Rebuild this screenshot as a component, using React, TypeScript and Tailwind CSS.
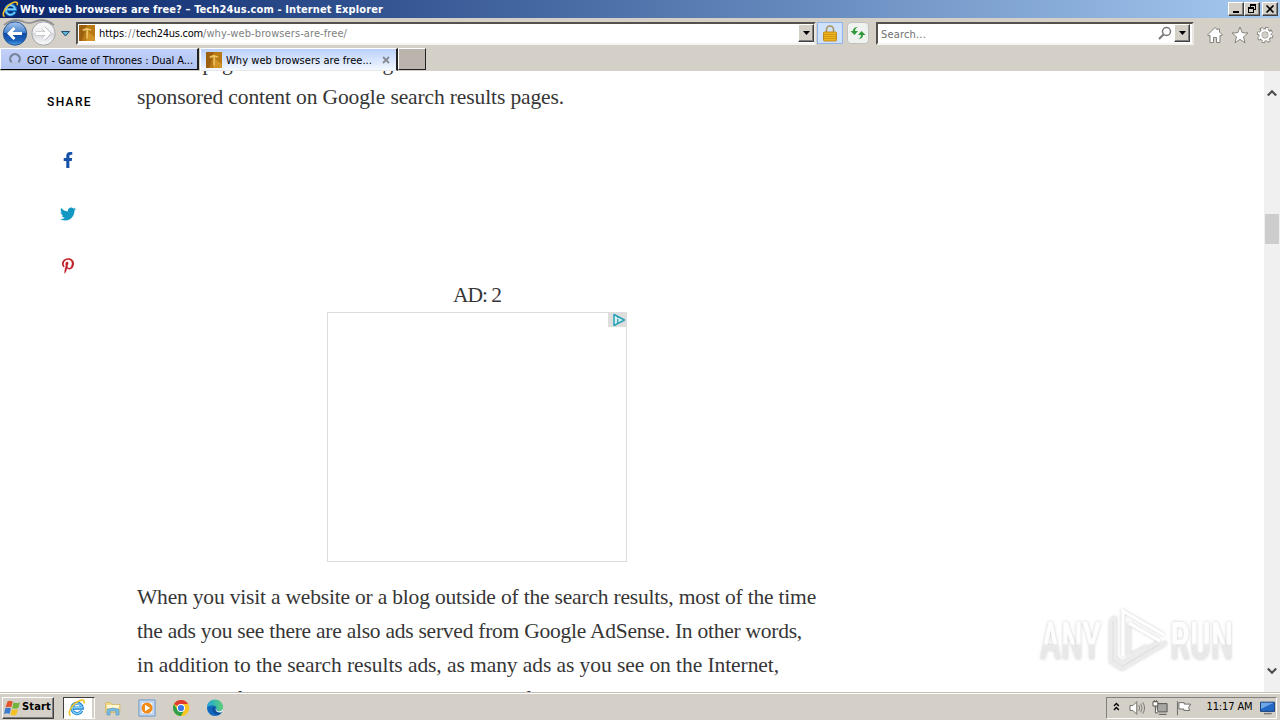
import { useLayoutEffect, useRef, useState } from "react";
import { FaFacebookF, FaTwitter, FaPinterestP } from "react-icons/fa";

/** Single line of text, tracked so that it spans the given width. */
function Fit({ text, width, className = "" }: { text: string; width: number; className?: string }) {
  const ref = useRef<HTMLSpanElement>(null);
  const [spacing, setSpacing] = useState(0);
  useLayoutEffect(() => {
    if (!ref.current) return;
    const natural = ref.current.getBoundingClientRect().width - spacing * text.length;
    setSpacing((width - natural) / text.length);
  }, [text, width]);
  return (
    <span ref={ref} className={"inline-block whitespace-pre " + className} style={{ letterSpacing: spacing + "px" }}>
      {text}
    </span>
  );
}

function IeLogo({ className = "" }: { className?: string }) {
  return (
    <svg viewBox="0 0 18 18" className={className}>
      <path d="M13.8 11.6A5.2 5.2 0 1 1 14.3 9.2H5.2" fill="none" stroke="#1b7fd0" strokeWidth="3.2" />
      <path d="M13.6 11.6A5 5 0 1 1 14 8.8H5" fill="none" stroke="#7fd0fa" strokeWidth="1.5" />
      <path d="M2.6 16.6C-1 14 4 5 11 2c4-1.8 6-.8 5 2.4" fill="none" stroke="#f2c428" strokeWidth="1.6" />
    </svg>
  );
}

function SiteIcon() {
  return (
    <svg viewBox="0 0 16 16" className="h-4 w-4 shrink-0">
      <rect width="16" height="16" fill="#b97a16" />
      <path d="M0 0H8L3 16H0Z" fill="#9c6110" />
      <path d="M9 7L16 12V16H7Z" fill="#cf9326" />
      <path d="M3.500 4.500l4-1.800 5 1.800-.8 1.200-2.500-.6L8.800 13.500H7.200L7.400 5.200 4 6Z" fill="#ecc263" />
    </svg>
  );
}

const raised = "border border-t-white border-l-white border-r-[#404040] border-b-[#404040] bg-[#d4d0c8]";

function DropButton() {
  return (
    <div className={"flex h-[18px] w-4 items-center justify-center shadow-[inset_-1px_-1px_#808080] " + raised}>
      <svg viewBox="0 0 7 4" className="h-1 w-[7px]"><path d="M0 0H7L3.5 4Z" fill="#000" /></svg>
    </div>
  );
}

function TitleBar() {
  return (
    <div className="flex h-[18px] items-center bg-linear-to-r from-[#0a246a] to-[#a6caf0] pr-[2px] pl-[2px]">
      <IeLogo className="h-[17px] w-[17px]" />
      <Fit text="Why web browsers are free? – Tech24us.com - Internet Explorer" width={363} className="mt-[2px] ml-px text-[11px] leading-[16px] font-bold text-white" />
      <div className="ml-auto flex">
        <div className={"flex h-[14px] w-4 items-center justify-center shadow-[inset_-1px_-1px_#808080] " + raised}>
          <svg viewBox="0 0 12 10" className="h-[10px] w-3"><path d="M3 7h6v2H3z" /></svg>
        </div>
        <div className={"flex h-[14px] w-4 items-center justify-center shadow-[inset_-1px_-1px_#808080] " + raised}>
          <svg viewBox="0 0 12 10" className="h-[10px] w-3" shapeRendering="crispEdges"><path d="M4 0h6v6H8V5h1V2H5v1H4zM2 3h6v6H2zm1 2v3h4V5z" fillRule="evenodd" /></svg>
        </div>
        <div className={"ml-[2px] flex h-[14px] w-4 items-center justify-center shadow-[inset_-1px_-1px_#808080] " + raised}>
          <svg viewBox="0 0 12 10" className="h-[10px] w-3"><path d="M2.500 1.500l7 7m0-7l-7 7" stroke="#000" strokeWidth="1.700" /></svg>
        </div>
      </div>
    </div>
  );
}

function NavButtons() {
  return (
    <svg viewBox="0 0 76 30" className="h-[30px] w-[76px] shrink-0">
      <defs>
        <linearGradient id="back" x1="0" y1="0" x2="0" y2="1">
          <stop offset="0" stopColor="#a9c8ee" /><stop offset=".45" stopColor="#4c86d0" /><stop offset=".5" stopColor="#0f4ba4" /><stop offset=".8" stopColor="#1c62bd" /><stop offset="1" stopColor="#4aa6ea" />
        </linearGradient>
        <linearGradient id="fwd" x1="0" y1="0" x2="0" y2="1">
          <stop offset="0" stopColor="#fafafa" /><stop offset=".48" stopColor="#ececee" /><stop offset=".5" stopColor="#d6d8dd" /><stop offset="1" stopColor="#fbfbfc" />
        </linearGradient>
      </defs>
      <path d="M4 7Q14 -1 24 4Q29 6 34 4Q44 -1 54 7" fill="none" stroke="#8d8d8d" strokeWidth="1.600" />
      <circle cx="15" cy="15.500" r="11.700" fill="url(#back)" stroke="#2a5591" />
      <circle cx="43.500" cy="15.500" r="11.700" fill="url(#fwd)" stroke="#a2a4aa" />
      <path d="M22 15.500H9.500M14.500 10L9 15.500L14.500 21" fill="none" stroke="#fff" strokeWidth="2.800" />
      <path d="M36 15.500H48.500M43.500 10L49 15.500L43.500 21" fill="none" stroke="#b0b2b8" strokeWidth="4" />
      <path d="M36 15.500H48.500M43.500 10L49 15.500L43.500 21" fill="none" stroke="#fff" strokeWidth="2.800" />
      <path d="M61.500 13.500H69.500L65.500 18Z" fill="#5fb4d8" stroke="#1b4d74" strokeWidth="1" />
    </svg>
  );
}

const sunken = "border-2 border-t-[#55514c] border-l-[#55514c] border-r-[#e9e6e1] border-b-[#f6f4f0] bg-white";

function AddressRow() {
  return (
    <div className="flex h-[30px] items-center bg-[#d4d0c8]">
      <NavButtons />
      <div className={"flex h-[23px] w-[740px] items-center pl-px " + sunken}>
        <SiteIcon />
        <div className="mt-[2px] ml-[4px] flex text-[11px] leading-[14px] text-[#808080]">
          <Fit text="https" width={25} className="text-black" />
          <Fit text="://" width={12} />
          <Fit text="tech24us.com" width={67} className="text-black" />
          <Fit text="/why-web-browsers-are-free/" width={144} />
        </div>
        <div className="ml-auto"><DropButton /></div>
      </div>
      <div className="ml-px flex h-[22px] w-[26px] items-center justify-center border border-[#8fb4e8] bg-[#cfe1fb]">
        <svg viewBox="0 0 14 17" className="h-[17px] w-[14px]">
          <path d="M3.500 8V4.500a3.500 3.500 0 0 1 7 0V8" fill="none" stroke="#a8925c" strokeWidth="1.600" />
          <rect x=".5" y="7" width="13" height="9" rx="1" fill="#f0b51e" stroke="#c08a1c" />
          <path d="M1 9.500h12M1 11.500h12M1 13.500h12" stroke="#c98f14" strokeWidth=".8" />
        </svg>
      </div>
      <div className="ml-1 flex h-[22px] w-[22px] items-center justify-center rounded-sm border border-[#bfc2bf] bg-[#eff2ef]">
        <svg viewBox="0 0 16 16" className="h-4 w-4">
          <path d="M8 2Q5 3 5 6H8L4.500 10L.5 6H3Q3 2 8 2Z" fill="#2f9a35" />
          <path d="M8 14Q11 13 11 10H8L11.500 6L15.500 10H13Q13 14 8 14Z" fill="#2f9a35" />
        </svg>
      </div>
      <div className={"ml-[7px] flex h-[23px] w-[318px] items-center pr-[2px] pl-[3px] " + sunken}>
        <Fit text="Search..." width={45} className="mt-[3px] text-[11px] leading-[14px] text-[#6f6f6f]" />
        <svg viewBox="0 0 14 14" className="ml-auto h-[14px] w-[14px]">
          <circle cx="8.500" cy="5.500" r="4" fill="none" stroke="#777" strokeWidth="1.500" />
          <path d="M5.500 8.500L1 13" stroke="#777" strokeWidth="2" />
        </svg>
        <div className="ml-[2px]"><DropButton /></div>
      </div>
      <div className="mt-1 ml-[12px] flex gap-[7px]">
        <svg viewBox="0 0 18 18" className="h-[18px] w-[18px]">
          <path d="M9 1.500L1.500 9L3 10L4 9.200V16.500H7.500V11.500H10.500V16.500H14V9.200L15 10L16.500 9L13.500 6V3H11.500V4Z" fill="#fff" stroke="#85827d" strokeLinejoin="round" />
        </svg>
        <svg viewBox="0 0 18 18" className="h-[18px] w-[18px]">
          <path d="M9 1L11.200 6.700L17 7L12.500 10.800L14 16.800L9 13.400L4 16.800L5.500 10.800L1 7L6.800 6.700Z" fill="#fff" stroke="#85827d" strokeLinejoin="round" />
        </svg>
        <svg viewBox="0 0 18 18" className="h-[18px] w-[18px]">
          <circle cx="9" cy="9" r="6.600" fill="none" stroke="#85827d" strokeWidth="3.400" strokeDasharray="2.900 2.280" />
          <circle cx="9" cy="9" r="4.700" fill="none" stroke="#85827d" strokeWidth="4" />
          <circle cx="9" cy="9" r="6.300" fill="none" stroke="#fff" strokeWidth="2.200" strokeDasharray="1.900 3.048" strokeDashoffset="-.3" />
          <circle cx="9" cy="9" r="4.600" fill="none" stroke="#fff" strokeWidth="2.400" />
          <circle cx="9" cy="9" r="2.700" fill="#d4d0c8" />
        </svg>
      </div>
    </div>
  );
}

function TabRow() {
  return (
    <div className="flex h-[23px] bg-[#d4d0c8] text-[11px] leading-[14px] text-black">
      <div className="flex h-[22px] w-[199px] items-center border border-t-white border-r-2 border-b-black border-l-white border-r-[#222] bg-linear-to-b from-[#c3d2fb] to-[#b0c2f0] pl-[7px]">
        <svg viewBox="0 0 14 14" className="h-[14px] w-[14px]">
          <circle cx="7" cy="7" r="4.800" fill="none" stroke="#b6c3dc" strokeWidth="2.200" />
          <path d="M3.500 10.300A4.800 4.800 0 1 1 10.500 10.300" fill="none" stroke="#76849c" strokeWidth="2.200" />
        </svg>
        <Fit text="GOT - Game of Thrones : Dual A..." width={166} className="mt-[3px] ml-[5px]" />
      </div>
      <div className="ml-px flex h-[23px] w-[198px] items-center border border-t-white border-r-2 border-b-[#e8e8e8] border-l-white border-r-[#222] bg-linear-to-b from-[#b9cffb] to-[#f4f8ff] pr-[6px] pl-[5px]">
        <SiteIcon />
        <Fit text="Why web browsers are free..." width={146} className="mt-[2px] ml-[4px]" />
        <svg viewBox="0 0 8 8" className="ml-auto h-2 w-2"><path d="M1 1L7 7M7 1L1 7" stroke="#858a94" strokeWidth="1.800" /></svg>
      </div>
      <div className="h-[22px] w-[28px] border border-t-white border-b-[#222] border-l-white border-r-[#222] bg-[#bab4ac]" />
    </div>
  );
}

function ShareRail() {
  return (
    <aside className="flex w-[137px] shrink-0 flex-col items-center">
      <Fit text="SHARE" width={45} className="mt-[21px] ml-[2px] font-['Roboto'] text-[12px] leading-[20px] font-medium text-black [font-stretch:normal]" />
      <FaFacebookF className="mt-[40px] mr-[1px] h-4 w-4 text-[#1653a8]" />
      <FaTwitter className="mt-[38px] mr-[1px] h-4 w-4 text-[#1297c2]" />
      <FaPinterestP className="mt-[36px] mr-[1px] h-4 w-4 text-[#c1232b]" />
    </aside>
  );
}

function Article() {
  return (
    <main className="-mt-[25px] flex w-[680px] flex-col font-['Liberation_Serif',serif] text-[21.5px] leading-[34px] text-[#363636] *:shrink-0">
      <div className="h-[34px]"><Fit text="on web pages and search along" width={256} /></div>
      <div className="h-[34px]"><Fit text="sponsored content on Google search results pages." width={427} /></div>
      <div className="mt-[164px] h-[34px] text-center"><Fit text="AD: 2" width={48} /></div>
      <div className="mx-auto flex h-[250px] w-[300px] justify-end border border-[#dcdcdc]">
        <div className="flex h-[14px] w-[18px] items-center justify-end bg-[#dedede]">
          <svg viewBox="0 0 14 14" className="h-[14px] w-[14px]">
            <path d="M2 1.500L12.500 7L2 12.500Z" fill="#d9f1f4" stroke="#29a3b5" strokeWidth="1.500" strokeLinejoin="round" />
            <path d="M5.700 4v1M5.700 6v4" stroke="#29a3b5" strokeWidth="1.300" />
          </svg>
        </div>
      </div>
      <div className="mt-[18px] h-[34px]"><Fit text="When you visit a website or a blog outside of the search results, most of the time" width={679} /></div>
      <div className="h-[34px]"><Fit text="the ads you see there are also ads served from Google AdSense. In other words," width={665} /></div>
      <div className="h-[34px]"><Fit text="in addition to the search results ads, as many ads as you see on the Internet," width={642} /></div>
      <div className="h-[34px]"><Fit text="there will of the other or much where source from" width={428} /></div>
    </main>
  );
}

function Watermark() {
  return (
    <svg viewBox="0 0 210 80" className="absolute right-[39px] bottom-[12px] h-[80px] w-[210px]">
      <defs>
        <linearGradient id="wm" x1="0" y1="0" x2="0" y2="1">
          <stop offset="0" stopColor="#fff" /><stop offset=".53" stopColor="#fdfdfd" /><stop offset=".56" stopColor="#e9e9e9" /><stop offset="1" stopColor="#e6e6e6" />
        </linearGradient>
        <filter id="glow" x="-10%" y="-20%" width="120%" height="140%">
          <feDropShadow dx="0" dy="0" stdDeviation="1.800" floodColor="#777" floodOpacity=".42" />
        </filter>
      </defs>
      <g filter="url(#glow)">
        <g fontFamily="Roboto" fontSize="51" fontWeight="500" fill="url(#wm)">
          <text transform="translate(9 59) scale(.62 1)" textLength="99" lengthAdjust="spacingAndGlyphs">ANY</text>
          <text transform="translate(139 59) scale(.62 1)" textLength="102" lengthAdjust="spacingAndGlyphs">RUN</text>
        </g>
        <path d="M98 23V56L116 46M84 17L80 21V62L91 69L134 44V41M84 17V58L92 63L128 42" fill="none" stroke="#ececec" strokeWidth="3" />
        <path d="M92 56V11L133 35M98 23L129 41" fill="none" stroke="#fff" strokeWidth="3" />
      </g>
    </svg>
  );
}

function Scrollbar() {
  return (
    <div className="flex w-4 shrink-0 flex-col items-center bg-[#f0f0f0]">
      <svg viewBox="0 0 10 8" className="mt-[18px] h-2 w-[10px]"><path d="M.8 6.500L5 2.200L9.200 6.500" fill="none" stroke="#4e4e4e" strokeWidth="2.200" /></svg>
      <div className="mt-[117px] h-[30px] w-[14px] bg-[#cdcdcd]" />
      <svg viewBox="0 0 10 8" className="mt-auto mb-[17px] h-2 w-[10px]"><path d="M.8 1.500L5 5.800L9.200 1.500" fill="none" stroke="#4e4e4e" strokeWidth="2.200" /></svg>
    </div>
  );
}

function Taskbar() {
  return (
    <div className="flex h-7 items-center border-t border-[#c4c0b8] bg-[#d4d0c8] text-[11px] text-black shadow-[inset_0_1px_#fff]">
      <div className={"mt-[2px] ml-[2px] flex h-[22px] w-[52px] items-center pl-px shadow-[inset_-1px_-1px_#808080] " + raised}>
        <svg viewBox="0 0 17 16" className="h-4 w-[17px]">
          <path d="M3.500 1.500Q6 0 8.700 1.500L7.300 7.300Q5 6 1.500 7.500Z" fill="#e4552c" />
          <path d="M9.500 2.200Q12 4 16 2.200L14.300 8Q11 9.500 8.200 8Z" fill="#72b53a" />
          <path d="M1.300 8.300Q4.500 7 7 8.500L5.500 14Q3 12.500 0 14Z" fill="#3a7bd0" />
          <path d="M8 9Q10.500 10.500 14 9L12.300 15Q9.500 16.200 6.400 14.500Z" fill="#f4c026" />
        </svg>
        <Fit text="Start" width={29} className="ml-px font-bold" />
      </div>
      <div className="mt-[2px] ml-[9px] flex h-[22px] w-8 justify-between border border-t-[#404040] border-r-white border-b-white border-l-[#404040] bg-[#d4d0c8]">
        <div className="flex w-[26px] items-center justify-center bg-white"><IeLogo className="h-[18px] w-[18px]" /></div>
        <div className="w-[4px] border-l-2 border-white" />
      </div>
      <div className="mt-[2px] ml-[9px] flex items-center gap-4">
        <svg viewBox="0 0 18 18" className="h-[18px] w-[18px]">
          <path d="M1.500 3.500h5l1.500 2h8v8H1.500Z" fill="#f0d888" stroke="#d3b462" strokeWidth=".7" />
          <path d="M3 6h12v3H3z" fill="#fff7d6" /><path d="M3 16V10.500Q9 7.500 15 10.500V16H12V12H6V16Z" fill="#7bbbe2" stroke="#4e97c6" strokeWidth=".6" />
        </svg>
        <svg viewBox="0 0 18 18" className="h-[18px] w-[18px]">
          <path d="M1 1h16v16H1z" fill="#dceafa" stroke="#5c8ec9" /><path d="M3 3h12v12H3z" fill="#f5f8fc" stroke="#8bb0dd" strokeWidth=".7" />
          <circle cx="9" cy="9" r="5.500" fill="#f18a16" /><path d="M7 5.800L12.200 9L7 12.200Z" fill="#fff" />
        </svg>
        <svg viewBox="0 0 18 18" className="h-[18px] w-[18px]">
          <circle cx="9" cy="9" r="8" fill="#f9c522" /><path d="M9 9L2.070 5A8 8 0 0 1 16 5Z" fill="#df3b30" />
          <path d="M2.070 5A8 8 0 0 0 9 17L12.500 11L9 9L5.500 11Z" fill="#2fa04c" /><path d="M9 5H16A8 8 0 0 1 9 17L12.500 11Z" fill="#f9c522" />
          <circle cx="9" cy="9" r="4" fill="#fff" /><circle cx="9" cy="9" r="3.100" fill="#3b78e7" />
        </svg>
        <svg viewBox="0 0 18 18" className="h-[18px] w-[18px]">
          <defs><linearGradient id="edge" x1="0" x2="1"><stop offset="0" stopColor="#21a4dd" /><stop offset="1" stopColor="#5bd270" /></linearGradient></defs>
          <circle cx="9" cy="9" r="8" fill="#1268bd" />
          <path d="M1 8.500A8 8 0 0 1 17 8.500Q17 12 13 12Q10 12 10.500 10Q11 7 7.500 6.500Q3 6 1 8.500Z" fill="url(#edge)" />
          <path d="M6 10Q6.500 15 13 15.800Q16 14 16 12.500Q12 15 9.500 11.500Q8.500 10 9.500 8.500Q6.500 7.500 6 10Z" fill="#0d4f99" />
          <path d="M10.500 9.500Q9.500 11.800 12.500 12.300Q16 12.300 17 9.500V12L15 13.500Q10 14 9.500 10Z" fill="#e6f3f7" />
        </svg>
      </div>
      <div className="mt-[2px] mr-[3px] ml-auto flex h-[22px] w-[171px] items-center border border-t-[#808080] border-r-white border-b-white border-l-[#808080] pl-[6px]">
        <svg viewBox="0 0 7 9" className="mb-[3px] h-[9px] w-[7px]"><path d="M1 4L3.500 1.500L6 4M1 8L3.500 5.500L6 8" fill="none" stroke="#000" strokeWidth="1.400" /></svg>
        <svg viewBox="0 0 17 16" className="ml-[9px] h-4 w-[17px]">
          <path d="M1 5.500H4L8 1.500V14.500L4 10.500H1Z" fill="#fff" stroke="#6c6a66" />
          <path d="M10 5Q12 8 10 11M12 3.500Q15 8 12 12.500M14 2Q18 8 14 14" fill="none" stroke="#7b7873" />
        </svg>
        <svg viewBox="0 0 17 16" className="ml-[7px] h-4 w-[17px]">
          <path d="M5.500 3.500H15.500V12H5.500ZM7 14.500H15" fill="#a8a6a2" stroke="#55534f" />
          <path d="M1 1.500H6V6H1ZM2.500 0V2M4.500 0V2M3.500 6V13H6" fill="#fff" stroke="#55534f" />
        </svg>
        <svg viewBox="0 0 17 16" className="ml-[7px] h-4 w-[17px]">
          <path d="M1.500 1V15.500M3 2.500H8.500V4H15L13 7.500L14 10.500H8V9H3Z" fill="#fff" stroke="#6c6a66" />
        </svg>
        <Fit text="11:17 AM" width={46} className="ml-[14px]" />
        <svg viewBox="0 0 16 14" className="ml-[8px] h-[14px] w-4">
          <path d="M.5 1H15V10.500H.5Z" fill="#2368c4" stroke="#173f79" /><path d="M1 1.500H14L1 8Z" fill="#6fa6e8" /><path d="M4 12H12V13.500H4Z" fill="#777" />
        </svg>
      </div>
    </div>
  );
}

export default function App() {
  return (
    <div className="flex h-[720px] w-[1280px] flex-col overflow-hidden bg-white font-['DejaVu_Sans_Condensed','DejaVu_Sans',sans-serif] [font-stretch:condensed]">
      <TitleBar />
      <AddressRow />
      <TabRow />
      <div className="relative flex min-h-0 flex-1 overflow-hidden bg-white">
        <ShareRail />
        <Article />
        <div className="ml-auto flex"><Scrollbar /></div>
        <Watermark />
      </div>
      <Taskbar />
    </div>
  );
}
